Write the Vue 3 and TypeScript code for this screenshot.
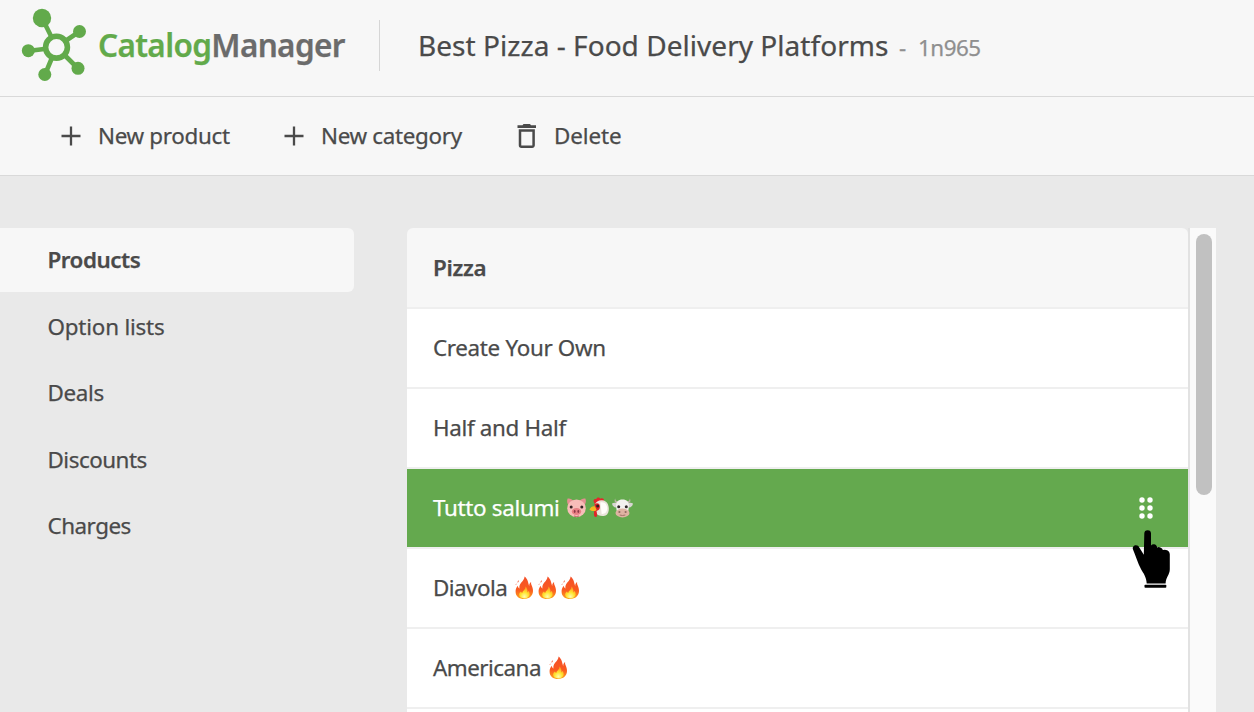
<script setup lang="ts">
interface Row {
  id: string
  label: string
  icons: string[]
  kind?: 'head' | 'active'
}

const navItems = ['Products', 'Option lists', 'Deals', 'Discounts', 'Charges']

const rows: Row[] = [
  { id: 'pizza', label: 'Pizza', icons: [], kind: 'head' },
  { id: 'create', label: 'Create Your Own', icons: [] },
  { id: 'half', label: 'Half and Half', icons: [] },
  { id: 'tutto', label: 'Tutto salumi', icons: ['pig', 'chicken', 'cow'], kind: 'active' },
  { id: 'diavola', label: 'Diavola', icons: ['fire', 'fire', 'fire'] },
  { id: 'americana', label: 'Americana', icons: ['fire'] },
  { id: 'next', label: '', icons: [] },
]
</script>

<template>
  <div class="app">
    <svg class="defs" aria-hidden="true">
      <defs>
        <linearGradient id="flame" x1="0" y1="0" x2="0" y2="1">
          <stop offset="0" stop-color="#f4502a" />
          <stop offset="0.6" stop-color="#fa5a1f" />
          <stop offset="1" stop-color="#fda51d" />
        </linearGradient>
        <radialGradient id="core" cx="0.5" cy="0.85" r="0.75">
          <stop offset="0" stop-color="#fffbb0" />
          <stop offset="0.5" stop-color="#ffe42e" />
          <stop offset="1" stop-color="#ff9a26" />
        </radialGradient>
        <symbol id="fire" viewBox="0 0 23 24">
          <path fill="url(#flame)" d="M11.600.5c-.2 2.600-1.700 4.200-3.300 6C6.700 8.400 6 10.300 6.500 12.600c-1-.6-1.500-1.500-1.600-2.800C3.300 11.500 2.500 13.400 2.600 15.900c.1 4.200 3.500 7.100 8.600 7.100 5.200 0 8.700-3.100 8.800-7.900 0-2.800-.9-4.700-1.600-6.300-.3-.8-.5-1.700-.3-2.700-1.300.8-2 2.300-1.900 4.100C15 6.500 15 3.200 11.600.5z" />
          <path fill="#f4502a" d="M5.600 4.300c-.9.700-1.200 1.500-.9 2.400.9-.4 1.200-1.300.9-2.400zM3.400 7.600c-.7.400-.9.900-.7 1.500.6-.1.900-.7.700-1.500z" />
          <path fill="url(#core)" d="M12.400 10.600c.1 2.200-.8 3.200-2.200 4.300-.7.600-1 1.300-.9 2.200-.7-.3-1.100-.8-1.300-1.600-1.300 1.100-2 2-1.900 3.300.1 2.300 2.200 3.600 5.200 3.600s5.300-1.500 5.400-3.900c0-1.500-.5-2.600-1.100-3.700-.2.800-.5 1.300-1.100 1.700.1-2.900-.5-4.500-2.100-5.900z" />
        </symbol>
        <symbol id="pig" viewBox="0 0 23 24">
          <path fill="#e58f92" d="M2.600 2.500c2.500-.3 4.600.6 5.800 2.400L3.900 9.700C2.100 7.700 1.600 5 2.600 2.500zM20.400 2.500c-2.500-.3-4.600.6-5.800 2.400l4.500 4.800c1.800-2 2.300-4.700 1.300-7.200z" />
          <ellipse cx="11.500" cy="12.300" rx="9.300" ry="8.900" fill="#f8bdb9" />
          <ellipse cx="11.500" cy="15.500" rx="4.700" ry="3.600" fill="#e88085" />
          <ellipse cx="9.700" cy="15.500" rx=".9" ry="1.400" fill="#8d3848" />
          <ellipse cx="13.300" cy="15.500" rx=".9" ry="1.400" fill="#8d3848" />
          <circle cx="6.200" cy="11" r="1.500" fill="#372426" />
          <circle cx="16.800" cy="11" r="1.500" fill="#372426" />
          <path fill="none" stroke="#b65b61" stroke-width=".9" d="M9 20q2.500 1.100 5 0" />
        </symbol>
        <symbol id="chicken" viewBox="0 0 23 24">
          <path fill="#e5262b" d="M6.300 7.200C4.700 4.500 6 2.300 8.200 3.300c.5-2.300 3.100-2.500 4-.6 2.300-1.200 4.200.2 3.800 2L9 9.500z" />
          <path fill="#e9e4da" d="M6.600 9.300C7.700 5.700 11 4 14.200 4.300c4.800.5 6.800 4.600 6.600 9-.1 3.300-1.500 6.100-4.100 6.500-3.600.6-7.400-.3-8.700-2.700z" />
          <path fill="#fffefa" d="M12.300 6.500c4.300-1.500 7.200 2.200 6.900 6.100-.2 3.500-2.100 5.600-5.500 5.300z" />
          <path fill="#df2529" d="M6.500 8.300c2.500-2.100 5.300-.8 5.400 2.100.1 2.800-1.400 4.100-3.400 4.500.5 2.600 1.300 5.900-.7 6.100-2.200.2-2.100-3.600-1.600-5.700z" />
          <path fill="#f6b51f" d="M7 10.200C4.300 9.900 2.600 11 1.500 13.500c2.100 1.900 5.200 2.200 7.100.4z" />
          <circle cx="9.700" cy="10.100" r="1.500" fill="#302224" />
        </symbol>
        <symbol id="cow" viewBox="0 0 23 24">
          <path fill="#bcb4a6" d="M4.200 2.600c.1 2 1.100 3 3.300 3.100L6 7.500C3.500 6.700 2.900 4.700 4.200 2.600zM18.800 2.600c-.1 2-1.100 3-3.300 3.100L17 7.500c2.500-.8 3.100-2.800 1.800-4.900z" />
          <path fill="#d8d6d3" d="M1 7.500c2.500-1.200 4.600-.6 5.700 1.100l-1.500 2.800C3 11.500 1.400 10 1 7.500zM22 7.500c-2.500-1.200-4.600-.6-5.700 1.100l1.500 2.800c2.200.1 3.800-1.400 4.200-3.900z" />
          <path fill="#f3f1ef" d="M11.500 3.500c4.800 0 6.900 3.100 6.400 7.200l-.9 6.400H6l-.9-6.400c-.5-4.100 1.600-7.200 6.400-7.200z" />
          <ellipse cx="11.500" cy="17" rx="7" ry="4.400" fill="#dfb3a2" />
          <ellipse cx="8.400" cy="16" rx="1.100" ry=".8" fill="#75514a" />
          <ellipse cx="14.600" cy="16" rx="1.100" ry=".8" fill="#75514a" />
          <circle cx="7.700" cy="10.700" r="1.500" fill="#30272a" />
          <circle cx="15.300" cy="10.700" r="1.500" fill="#30272a" />
          <path fill="none" stroke="#9c6d61" stroke-width=".9" d="M8.700 19q2.800 1 5.600 0" />
        </symbol>
      </defs>
    </svg>

    <header class="header">
      <svg class="logo" width="66" height="74" viewBox="21 8 66 74">
        <g stroke="#62aa4b" stroke-width="4.600">
          <path d="M42 18 56.500 47M79.500 31.500 56.500 47M28 51 56.500 47.500M45 74.500 56.500 47M78 68.500 56.500 47" />
        </g>
        <g fill="#62aa4b">
          <circle cx="42" cy="18" r="9.200" />
          <circle cx="79.500" cy="31.500" r="6.500" />
          <circle cx="28.300" cy="50.700" r="6.500" />
          <circle cx="44.800" cy="74.500" r="6.500" />
          <circle cx="78" cy="68.300" r="6.500" />
        </g>
        <circle cx="56.500" cy="47.200" r="10.900" fill="#f7f7f7" stroke="#62aa4b" stroke-width="5.600" />
      </svg>
      <div class="brand"><span class="green">Catalog</span><span class="grey">Manager</span></div>
      <div class="divider"></div>
      <h1 class="title">Best Pizza - Food Delivery Platforms</h1>
      <span class="dash">-</span>
      <span class="code">1n965</span>
    </header>

    <nav class="toolbar">
      <button class="tool tool-product">
        <svg width="20" height="20" viewBox="0 0 20 20"><path d="M10 .5v19M.5 10h19" stroke="#4a4a4a" stroke-width="2.300" /></svg>
        <span>New product</span>
      </button>
      <button class="tool tool-category">
        <svg width="20" height="20" viewBox="0 0 20 20"><path d="M10 .5v19M.5 10h19" stroke="#4a4a4a" stroke-width="2.300" /></svg>
        <span>New category</span>
      </button>
      <button class="tool tool-delete">
        <svg width="20" height="24" viewBox="0 0 20 24">
          <path fill="#4a4a4a" d="M.5 1.300h5L6.500 0h6.500l1 1.300h5v2.600H.5z" />
          <path fill="none" stroke="#4a4a4a" stroke-width="2.500" d="M3 6.500h13.600v14.700a1.500 1.500 0 0 1-1.500 1.500H4.500A1.500 1.500 0 0 1 3 21.200z" />
        </svg>
        <span>Delete</span>
      </button>
    </nav>

    <main class="body">
      <ul class="side">
        <li v-for="(item, i) in navItems" :key="item" :class="['side-item', 'side-' + i, { selected: i === 0 }]">
          <span>{{ item }}</span>
        </li>
      </ul>

      <div class="panel">
        <ul class="list">
          <li v-for="row in rows" :key="row.id" :class="['row', 'row-' + row.id, row.kind]">
            <span class="label">{{ row.label }}</span>
            <span v-if="row.icons.length" class="icons">
              <svg v-for="(icon, i) in row.icons" :key="i" width="23" height="24"><use :href="'#' + icon" /></svg>
            </span>
            <svg v-if="row.kind === 'active'" class="grip" width="14" height="22" viewBox="0 0 14 22">
              <g fill="#fff">
                <circle cx="3" cy="3" r="2.700" /><circle cx="11" cy="3" r="2.700" />
                <circle cx="3" cy="11" r="2.700" /><circle cx="11" cy="11" r="2.700" />
                <circle cx="3" cy="19" r="2.700" /><circle cx="11" cy="19" r="2.700" />
              </g>
            </svg>
          </li>
        </ul>
        <div class="track"><div class="thumb"></div></div>
      </div>
    </main>

    <svg class="pointer" width="40" height="60" viewBox="1131 529 40 60">
      <path d="M1144.300 533.500a3.300 3.300 0 0 1 6.700 0v11.900q1-1.200 3-1.100 2.600.2 3.200 3.200 1.300-.7 3.100-.1 2.100.7 2.600 2.700 1.500-.6 3.200-.1 3.500.9 3.700 4.200v15c0 5.500-3.900 7.500-4.200 14.300h-18.900c-.4-6.600-3.200-10-5.500-13.900-3.500-6.500-5.600-14.500-8.200-20.200-.8-2.300.7-4.100 3-4.100 1.600 0 2.600.8 3.300 2.300l4.500 7.100z" />
      <rect x="1144.500" y="584.800" width="21.800" height="3" rx=".8" />
    </svg>
  </div>
</template>

<style>
html,
body {
  margin: 0;
  overflow: hidden;
}
</style>

<style scoped>
.app {
  position: relative;
  display: flex;
  flex-direction: column;
  width: 1254px;
  height: 712px;
  overflow: hidden;
  background: #e9e9e9;
  color: #4a4a4a;
  font-family: "Noto Sans", "Open Sans", sans-serif;
  font-size: 22.4px;
  line-height: 30px;
  letter-spacing: -0.32px;
  white-space: nowrap;
  -webkit-text-stroke: 0.25px currentColor;
}
.defs {
  position: absolute;
  width: 0;
  height: 0;
}
.header {
  box-sizing: border-box;
  display: flex;
  align-items: center;
  flex: 0 0 97px;
  padding-left: 21px;
  padding-bottom: 6px;
  background: #f7f7f7;
  border-bottom: 1px solid #d9d9d9;
}
.brand {
  width: 279px;
  margin-left: 11px;
  font-size: 31.5px;
  font-weight: 600;
  letter-spacing: -0.65px;
}
.green { color: #62aa4b; }
.grey { color: #6b6b6b; }
.divider {
  width: 1px;
  height: 51px;
  margin-left: 2px;
  margin-right: 1px;
  background: #d6d6d6;
}
.title {
  width: 481px;
  margin: 0 0 0 37px;
  font-size: 28px;
  font-weight: 400;
  letter-spacing: 0.04px;
}
.dash,
.code {
  padding-top: 5px;
  color: #8f8f8f;
  letter-spacing: -0.5px;
}
.dash { width: 19px; }
.toolbar {
  box-sizing: border-box;
  display: flex;
  align-items: center;
  flex: 0 0 79px;
  padding-left: 61px;
  background: #f7f7f7;
  border-bottom: 1px solid #d9d9d9;
}
.tool {
  display: flex;
  align-items: center;
  gap: 17px;
  padding: 0;
  border: 0;
  background: none;
  color: inherit;
  font: inherit;
  letter-spacing: inherit;
}
.tool-product { width: 223px; }
.tool-category { width: 233px; }
.tool-delete { letter-spacing: -0.1px; }
.body {
  display: flex;
  gap: 53px;
  padding-top: 52px;
}
.side,
.list {
  margin: 0;
  padding: 0;
  list-style: none;
}
.side {
  display: flex;
  flex-direction: column;
  gap: 2.500px;
  width: 354px;
}
.side-item {
  box-sizing: border-box;
  display: flex;
  align-items: center;
  height: 64px;
  padding-left: 47.500px;
  border-radius: 0 6px 6px 0;
}
.side-0,
.side-3,
.side-4 { letter-spacing: -0.48px; }
.side-1 { letter-spacing: -0.2px; }
.selected {
  background: #f7f7f7;
  font-weight: 600;
}
.panel {
  display: flex;
  height: 484px;
  overflow: hidden;
}
.list {
  width: 781px;
  border-right: 2px solid #e2e2e2;
}
.row {
  box-sizing: border-box;
  display: flex;
  align-items: center;
  height: 80px;
  padding: 0 35px 0 26px;
  background: #fff;
  border-bottom: 2px solid #efefef;
}
.row:first-child { height: 81px; }
.row-diavola,
.row-americana { letter-spacing: -0.52px; }
.head {
  background: #f7f7f7;
  border-radius: 6px 6px 0 0;
  font-weight: 600;
}
.active {
  background: #64a94e;
  color: #fff;
}
.icons {
  display: flex;
  margin-left: 6px;
}
.grip { margin-left: auto; }
.track {
  width: 26px;
  padding-top: 6px;
  background: #fafafa;
}
.thumb {
  width: 16px;
  height: 261px;
  margin-left: 6px;
  border-radius: 8px;
  background: #c1c1c1;
}
.pointer {
  position: absolute;
  left: 1131px;
  top: 529px;
}
</style>
